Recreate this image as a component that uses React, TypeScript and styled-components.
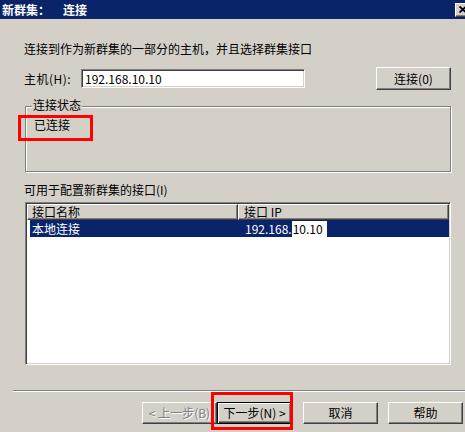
import React from "react";
import styled, { createGlobalStyle, css } from "styled-components";

const Global = createGlobalStyle`
  html, body { margin: 0; padding: 0; background: #d4d0c8; }
  body { font-family: "Noto Sans CJK SC", "Noto Sans", sans-serif; font-size: 12px; }
  * { box-sizing: border-box; }
`;

const Window = styled.div`
  position: relative;
  width: 465px;
  height: 432px;
  overflow: hidden;
  background: #d4d0c8;
  display: flex;
  flex-direction: column;
  font-family: "Noto Sans CJK SC", "Noto Sans", sans-serif;
  font-size: 12px;
  color: #000;
`;

const TitleBar = styled.div`
  height: 19px;
  flex: none;
  background: #0a246a;
  display: flex;
  align-items: center;
  padding-left: 2px;
  color: #fff;
  font-weight: bold;
  font-size: 12px;
  line-height: 19px;
`;

const TitleText = styled.span<{ $ml?: number }>`
  margin-left: ${(p) => p.$ml ?? 0}px;
`;

const CloseButton = styled.div`
  margin-left: auto;
  margin-right: -6px;
  width: 16px;
  height: 14px;
  background: #d4d0c8;
  border: 1px solid;
  border-color: #fff #404040 #404040 #fff;
  box-shadow: inset -1px -1px #808080;
  display: flex;
  align-items: center;
  justify-content: center;
`;

const Content = styled.div`
  display: flex;
  flex-direction: column;
  padding: 0 14px 0 24px;
`;

const TextLine = styled.div<{ $mt: number }>`
  margin-top: ${(p) => p.$mt}px;
  line-height: 16px;
  height: 16px;
  white-space: nowrap;
`;

const HostRow = styled.div`
  margin-top: 10px;
  height: 23px;
  display: flex;
  align-items: center;
`;

const HostLabel = styled.span`
  width: 57px;
  line-height: 16px;
  white-space: nowrap;
  letter-spacing: 0.5px;
`;

const TextField = styled.div`
  width: 224px;
  height: 19px;
  background: #fff;
  border: 1px solid;
  border-color: #808080 #fff #fff #808080;
  box-shadow: inset 1px 1px #404040, inset -1px -1px #d4d0c8;
  padding-left: 3px;
  line-height: 17px;
  white-space: nowrap;
`;

const PushButton = styled.div<{ $kind?: "normal" | "default" | "disabled"; $ml?: number; $h?: number }>`
  width: 75px;
  height: ${(p) => p.$h ?? 22}px;
  margin-left: ${(p) => p.$ml ?? 0}px;
  background: #d4d0c8;
  display: flex;
  align-items: center;
  justify-content: center;
  white-space: nowrap;
  line-height: 16px;
  flex: none;
  ${(p) =>
    p.$kind === "default"
      ? css`
          border: 1px solid #000;
          box-shadow: inset 1px 1px #fff, inset -1px -1px #404040, inset -2px -2px #808080;
        `
      : css`
          border: 1px solid;
          border-color: #fff #404040 #404040 #fff;
          box-shadow: inset -1px -1px #808080;
        `}
  ${(p) =>
    p.$kind === "disabled" &&
    css`
      color: #808080;
      text-shadow: 1px 1px 0 #fff;
    `}
`;

const PushRight = styled(PushButton)`
  margin-left: auto;
`;

const GroupBox = styled.div`
  margin-top: 16px;
  margin-left: 1px;
  height: 66px;
  border: 1px solid #808080;
  box-shadow: inset 1px 1px 0 #fff, 1px 1px 0 #fff;
  display: flex;
  flex-direction: column;
  padding-left: 6px;
`;

const Legend = styled.div`
  margin-top: -9px;
  padding: 0 1px;
  width: fit-content;
  background: #d4d0c8;
  line-height: 14px;
  height: 14px;
`;

const StatusText = styled.div`
  margin-top: 5px;
  padding-left: 2px;
  line-height: 16px;
`;

const ListView = styled.div`
  margin-top: 4px;
  margin-left: 1px;
  height: 163px;
  background: #fff;
  border: 1px solid;
  border-color: #808080 #fff #fff #808080;
  box-shadow: inset 1px 1px #404040, inset -1px -1px #d4d0c8;
  padding: 1px;
  display: flex;
  flex-direction: column;
`;

const HeaderRow = styled.div`
  display: grid;
  grid-template-columns: 211px 1fr;
  height: 16px;
`;

const HeaderCell = styled.div<{ $pl: number }>`
  background: #d4d0c8;
  border: 1px solid;
  border-color: #fff #404040 #404040 #fff;
  box-shadow: inset -1px -1px #808080;
  padding-left: ${(p) => p.$pl}px;
  display: flex;
  align-items: center;
  line-height: 14px;
  white-space: nowrap;
`;

const ItemRow = styled.div`
  margin-left: 3px;
  height: 17px;
  display: grid;
  grid-template-columns: 208px 1fr;
  background: #0a246a;
  color: #fff;
  line-height: 17px;
`;

const ItemCell = styled.div<{ $pl: number }>`
  padding-left: ${(p) => p.$pl}px;
  white-space: nowrap;
  display: flex;
  align-items: center;
`;

const InlineEdit = styled.span`
  background: #fff;
  color: #000;
  width: 35px;
  height: 16px;
  line-height: 16px;
  padding-left: 1px;
`;

const Separator = styled.div`
  margin: 25px 0 0 13px;
  height: 2px;
  border-top: 1px solid #808080;
  border-bottom: 1px solid #fff;
`;

const ButtonBar = styled.div`
  margin-top: 10px;
  padding-left: 142px;
  display: flex;
  align-items: center;
`;

const Highlight = styled.div<{ $x: number; $y: number; $w: number; $h: number }>`
  position: absolute;
  left: ${(p) => p.$x}px;
  top: ${(p) => p.$y}px;
  width: ${(p) => p.$w}px;
  height: ${(p) => p.$h}px;
  border: 3px solid #ff0000;
  pointer-events: none;
`;

export default function App() {
  return (
    <>
      <Global />
      <Window>
        <TitleBar>
          <TitleText>新群集：</TitleText>
          <TitleText $ml={13}>连接</TitleText>
          <CloseButton>
            <svg width="8" height="7" viewBox="0 0 8 7">
              <path d="M0.5 0.5 L7 6.5 M7 0.5 L0.5 6.5" stroke="#000" strokeWidth="1.8" />
            </svg>
          </CloseButton>
        </TitleBar>
        <Content>
          <TextLine $mt={22}>连接到作为新群集的一部分的主机，并且选择群集接口</TextLine>
          <HostRow>
            <HostLabel>主机(H):</HostLabel>
            <TextField>192.168.10.10</TextField>
            <PushRight $h={23}>连接(0)</PushRight>
          </HostRow>
          <GroupBox>
            <Legend>连接状态</Legend>
            <StatusText>已连接</StatusText>
          </GroupBox>
          <TextLine $mt={10}>可用于配置新群集的接口(I)</TextLine>
          <ListView>
            <HeaderRow>
              <HeaderCell $pl={4}>接口名称</HeaderCell>
              <HeaderCell $pl={5}>接口 IP</HeaderCell>
            </HeaderRow>
            <ItemRow>
              <ItemCell $pl={2}>本地连接</ItemCell>
              <ItemCell $pl={7}>
                192.168.<InlineEdit>10.10</InlineEdit>
              </ItemCell>
            </ItemRow>
          </ListView>
        </Content>
        <Separator />
        <ButtonBar>
          <PushButton $kind="disabled">&lt; 上一步(B)</PushButton>
          <PushButton $kind="default">下一步(N) &gt;</PushButton>
          <PushButton $ml={11}>取消</PushButton>
          <PushButton $ml={10}>帮助</PushButton>
        </ButtonBar>
        <Highlight $x={18} $y={115} $w={75} $h={26} />
        <Highlight $x={211} $y={392} $w={82} $h={38} />
      </Window>
    </>
  );
}
